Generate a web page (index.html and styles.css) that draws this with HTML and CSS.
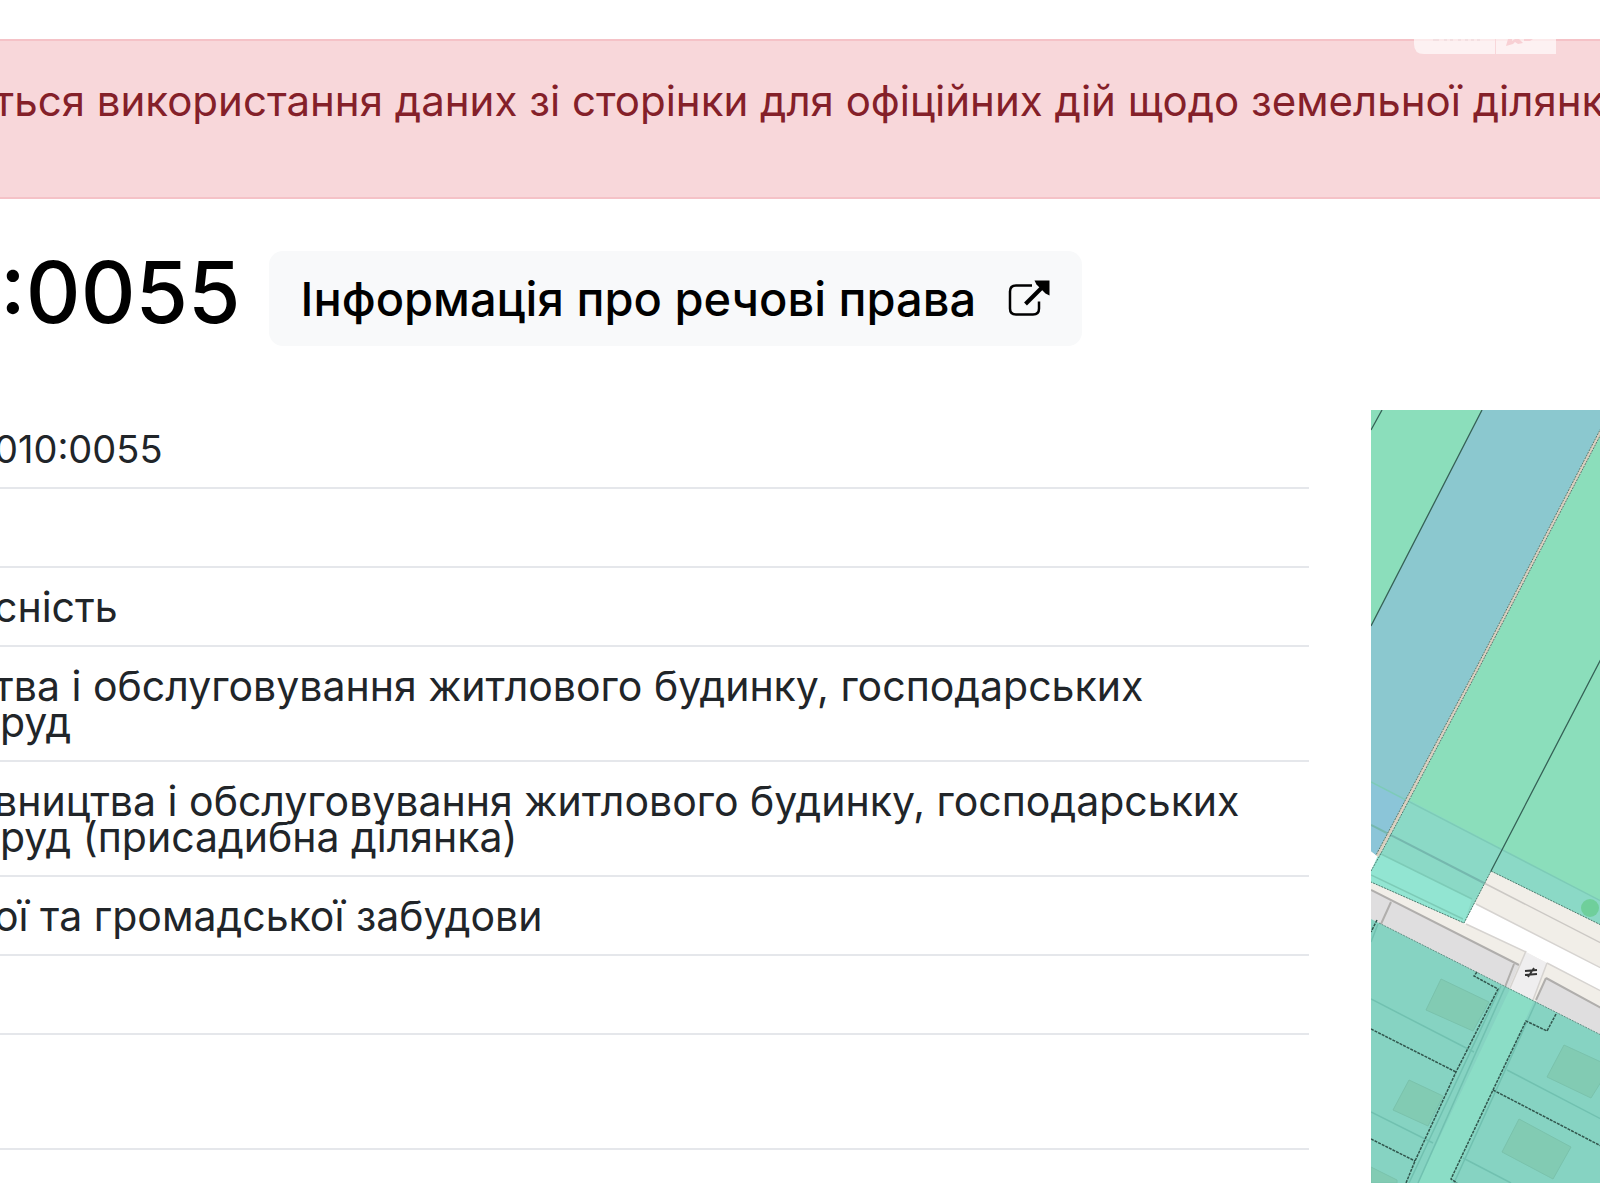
FILE: index.html
```html
<!DOCTYPE html>
<html lang="uk">
<head>
<meta charset="utf-8">
<title>Земельна ділянка</title>
<link rel="stylesheet" href="styles.css">
</head>
<body>
<div class="alert" role="alert">
  <p class="alert-text">ться використання даних зі сторінки для офіційних дій щодо земельної ділянк</p>
  <div class="badge" aria-hidden="true">
    <svg viewBox="0 0 142 15">
      <path d="M0 0H142V15H10Q0 15 0 5Z" fill="#fff" fill-opacity=".65"/>
      <path d="M81.500 0V15" stroke="#f8d7da"/>
      <path d="M19 1h6M30 1h3M36 1h3M44 1h3M51 1h3M57 1h3M63 1h3" stroke="#f3dfe1" stroke-width="2"/>
      <path d="M94 0h4l0 2 3-2h4l4 4-5 1-3-2-2 2-7 2zM110 0h9l-3 2h-6z" fill="#f8d0d4"/>
    </svg>
  </div>
</div>
<main class="page">
  <header class="heading">
    <h1 class="title">:0055</h1>
    <a class="rights" href="#">Інформація про речові права
      <svg class="rights-icon" viewBox="0 0 42 38" aria-hidden="true">
        <path d="M24 5.500H8Q2 5.500 2 11.500V28.500Q2 34.500 8 34.500H25Q31 34.500 31 28.500V21.500" fill="none" stroke="#000" stroke-width="2.500"/>
        <path d="M17.500 24L35 6.500" stroke="#000" stroke-width="4"/>
        <path d="M26.500 0.500H41.500V15.500L37.500 13.500L28.500 4.500Z"/>
      </svg>
    </a>
  </header>
  <div class="content">
    <table class="details">
      <tbody>
        <tr><td class="number">010:0055</td></tr>
        <tr><td>&nbsp;</td></tr>
        <tr><td>сність</td></tr>
        <tr><td>тва і обслуговування житлового будинку, господарських<br>руд</td></tr>
        <tr><td>вництва і обслуговування житлового будинку, господарських<br>руд (присадибна ділянка)</td></tr>
        <tr><td>ої та громадської забудови</td></tr>
        <tr><td>&nbsp;</td></tr>
        <tr><td>&nbsp;<br>&nbsp;</td></tr>
      </tbody>
    </table>
    <svg class="map" viewBox="0 0 229 773" preserveAspectRatio="xMinYMin slice" role="img" aria-label="Карта ділянки">
      <rect width="229" height="773" fill="#f1eee8"/>
      <!-- roads -->
      <path d="M-4 440L8 446L105 494L230 558V581L176 553L155 542L95 514L0 470Z" fill="#fff"/>
      <path d="M105 494L230 558M95 514L155 542M176 553L230 581" fill="none" stroke="#d6d3d0" stroke-width="1.500"/>
      <path d="M113 473L230 533" fill="none" stroke="#cbc8c4" stroke-width="1.500"/>
      <path d="M0 472L93 513L91 517L0 475Z" fill="#f1eee8"/>
      <path d="M0 480L148 555L137 580L0 512ZM175 568L230 598V625L164 592Z" fill="#dfdedf"/>
      <path d="M0 480L148 555M175 568L230 598M20 492L10 514M143 554L134 577M175 568L165 590" fill="none" stroke="#b0aeac" stroke-width="2"/>
      <path d="M155 542L176 553L161 592L138 580Z" fill="#efeeef"/>
      <path d="M155 541L139 578M176 553L162 590" stroke="#d6d3d0" stroke-width="1.500"/>
      <path d="M154 561l12-1M154 565l12-1M157 567l6-9" stroke="#333" stroke-width="1.800"/>
      <!-- upper parcels -->
      <path d="M0 0H111L0 216Z" fill="#8bdebb"/>
      <path d="M111 0H230V18L104 260L5 445L0 441V216Z" fill="#8bc8cf"/>
      <path d="M0 372L35 389L5 445L0 441Z" fill="#8bc5d8"/>
      <path d="M230 24L107 260L8 447L0 461V472L93 513L120 461L230 515Z" fill="#8bdebb"/>
      <path d="M38 390L230 491V515L120 461L93 513L0 472V461L8 447Z" fill="#8bd9c6"/>
      <path d="M8 443L101 489L93 513L0 472V461Z" fill="#92e5d2"/>
      <path d="M0 372L230 491M8 443L101 489M0 465L92 509" fill="none" stroke="#7dcbb7" stroke-width="1.500"/>
      <path d="M0 415L113 473" stroke="#75b8ae" stroke-width="2"/>
      <path d="M230 21L105 261L6 446" fill="none" stroke="#d9cfc0" stroke-width="3"/>
      <path d="M230 18L104 260L5 445M230 24L107 260L8 447L0 461M120 461L93 513L0 472M120 461L230 515" fill="none" stroke="#527a70" stroke-dasharray="2 1"/>
      <path d="M11 0L0 20M111 0L0 216M230 249L120 461" fill="none" stroke="#356156" stroke-width="1.300"/>
      <circle cx="219" cy="498" r="9" fill="#6fcf9b"/>
      <!-- lower parcels -->
      <path d="M0 509L135 577L230 625V773H0Z" fill="#86d3c2"/>
      <path d="M139 579L163 591L80 773H47Z" fill="#8bddc6"/>
      <path d="M134 577L47 773M130 576L38 773M165 592L83 773M0 589L103 642M0 702L62 733M136 660L230 709M92 748L140 773M7 514L0 532" fill="none" stroke="#71c1b0" stroke-width="1.500"/>
      <path d="M70 569L118 592L102 621L55 600ZM38 670L72 686L57 716L22 700ZM193 635L230 652V672L220 688L176 667ZM148 709L200 737L182 769L131 742ZM0 757L26 770V773H0Z" fill="#82cbb3" stroke="#7ac2ac"/>
      <path d="M8 513L135 577L230 625" fill="none" stroke="#608f84" stroke-dasharray="2 1"/>
      <path d="M6 510L0 522M106 562L103 566L127 579L85 662L44 751L35 773M0 619L85 662M0 729L44 751M185 604L176 621L155 611L122 680L80 769L86 773M122 680L230 736" fill="none" stroke="#31564d" stroke-width="1.500" stroke-dasharray="3 1"/>
    </svg>
  </div>
</main>
</body>
</html>
```
FILE: styles.css
```css
* {
  box-sizing: border-box;
}

body {
  margin: 0;
  padding-top: 39px;
  background: #fff;
  color: #212529;
  font-family: Inter, "Noto Sans", sans-serif;
  font-size: 41px;
  line-height: 36px;
  overflow: hidden;
}

.alert {
  position: relative;
  padding: 42px 0 78px;
  border: solid #f5c2c7;
  border-width: 2px 0;
  background: #f8d7da;
  color: #842029;
}

.alert-text {
  margin: 0;
  font-size: 42px;
  text-indent: -6px;
  white-space: nowrap;
}

.badge {
  position: absolute;
  top: -2px;
  right: 44px;
  width: 142px;
  height: 15px;
}

.badge svg {
  display: block;
}

.heading {
  display: flex;
  align-items: center;
  gap: 28px;
  padding-top: 52px;
  margin-bottom: 64px;
}

.title {
  margin: 0;
  padding-bottom: 12px;
  color: #000;
  font-size: 85px;
  font-weight: 500;
  line-height: 83px;
}

.rights {
  display: flex;
  align-items: center;
  gap: 32px;
  height: 95px;
  padding: 0 32px;
  border-radius: 14px;
  background: #f8f9fa;
  color: #000;
  font-size: 47px;
  font-weight: 500;
  text-decoration: none;
  white-space: nowrap;
}

.rights-icon {
  width: 42px;
  height: 38px;
}

.content {
  display: grid;
  grid-template-columns: minmax(0, 1309fr) minmax(0, 229fr);
  gap: 62px;
  align-items: start;
}

.details {
  width: 100%;
  border-collapse: separate;
  border-spacing: 0;
}

.details td {
  padding: 21px 0 20px;
  border-bottom: 2px solid #e5e7eb;
  text-indent: -6px;
  white-space: nowrap;
}

.details .number {
  font-size: 38px;
}

.map {
  display: block;
  width: 100%;
}
```
